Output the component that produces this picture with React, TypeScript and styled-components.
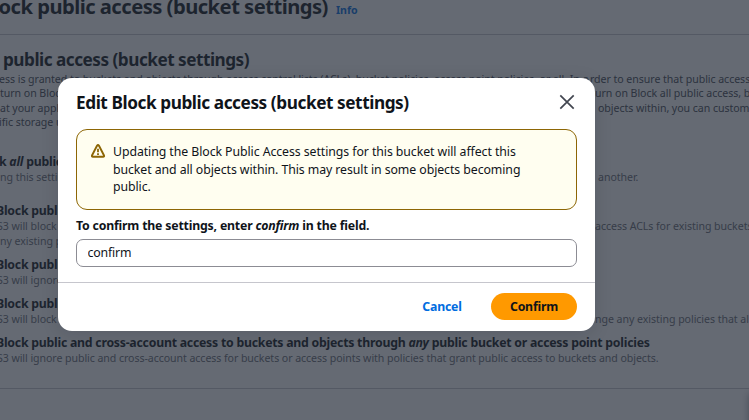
import React from "react";
import styled, { createGlobalStyle } from "styled-components";

const GlobalStyle = createGlobalStyle`
  * { box-sizing: border-box; }
  html, body { margin: 0; padding: 0; overflow: hidden; }
  body { font-family: "Noto Sans", "Open Sans", sans-serif; color: #0f141a; background: #fff; }
`;

const Screen = styled.div`
  position: relative;
  width: 749px;
  height: 420px;
  overflow: hidden;
  background: #fff;
`;

const Page = styled.main`
  display: flex;
  flex-direction: column;
  height: 100%;
  overflow: hidden;
  white-space: nowrap;
`;

const PageHeader = styled.header`
  display: flex;
  align-items: baseline;
  gap: 8px;
  height: 34px;
  margin-left: -7px;
  flex: none;
`;

const PageTitle = styled.h1`
  margin: -8px 0 0;
  font-size: 20.2px;
  line-height: 28px;
  font-weight: 700;
  letter-spacing: -0.53px;
`;

const InfoLink = styled.a`
  font-size: 10.6px;
  font-weight: 700;
  letter-spacing: 0;
  color: #006ce0;
`;

const SettingsPanel = styled.section`
  height: 355px;
  flex: none;
  border-top: 1px solid #c6c6cd;
  border-bottom: 1px solid #c6c6cd;
  padding-top: 13px;
`;

const PanelTitle = styled.h2`
  margin: 0 0 0 3px;
  font-size: 17.2px;
  line-height: 24px;
  font-weight: 700;
  letter-spacing: -0.5px;
`;

const Description = styled.div`
  display: flex;
  flex-direction: column;
  height: 57px;
  color: #424650;
`;

const Line = styled.div<{ $indent?: number; $height?: number; $spacing?: number }>`
  display: flex;
  height: ${(p) => p.$height ?? 14.3}px;
  line-height: ${(p) => p.$height ?? 14.3}px;
  margin-left: ${(p) => p.$indent ?? 0}px;
  font-size: 10.6px;
  letter-spacing: ${(p) => p.$spacing ?? -0.05}px;
  white-space: pre;
`;

const Lead = styled.span<{ $width: number }>`
  flex: none;
  width: ${(p) => p.$width}px;
  overflow: hidden;
`;

const Options = styled.div`
  display: flex;
  flex-direction: column;
  gap: 8px;
  padding-top: 25px;
`;

const Option = styled.div<{ $root?: boolean }>`
  margin-bottom: ${(p) => (p.$root ? 10 : 0)}px;
  color: #656871;
`;

const OptionTitle = styled.h3<{ $indent: number }>`
  margin: 0 0 0 ${(p) => p.$indent}px;
  height: 16px;
  font-size: 12.3px;
  line-height: 16px;
  font-weight: 700;
  letter-spacing: -0.245px;
  color: #0f141a;
`;

const HelpHandle = styled.div`
  position: absolute;
  left: 750px;
  top: 394px;
  width: 20px;
  height: 40px;
  box-shadow: 0 0 8px rgba(0, 7, 22, 0.5);
`;

const Overlay = styled.div`
  position: absolute;
  inset: 0;
  display: flex;
  align-items: flex-start;
  padding: 78px 0 0 58px;
  background: rgba(35, 43, 55, 0.7);
`;

const Dialog = styled.div`
  width: 537px;
  height: 253px;
  display: flex;
  flex-direction: column;
  background: #fff;
  border-radius: 14px;
  box-shadow: 0 3px 18px rgba(0, 7, 22, 0.12);
`;

const DialogHeader = styled.div`
  display: flex;
  align-items: center;
  justify-content: space-between;
  height: 51px;
  padding: 0 20px 3px 18px;
`;

const DialogTitle = styled.h2`
  margin: 0;
  padding-top: 1px;
  font-size: 17.2px;
  line-height: 22px;
  font-weight: 700;
  letter-spacing: -0.42px;
`;

const CloseButton = styled.button`
  display: flex;
  padding: 0;
  border: 0;
  background: none;
  color: #424650;
`;

const DialogBody = styled.div`
  display: flex;
  flex-direction: column;
  flex: 1;
  padding: 0 18px;
`;

const Alert = styled.div`
  display: flex;
  gap: 7px;
  height: 81px;
  padding: 13px 40px 0 14px;
  border: 1.5px solid #8d6605;
  border-radius: 11px;
  background: #fffef0;
`;

const AlertIcon = styled.svg`
  flex: none;
  margin-top: 1px;
`;

const AlertText = styled.p`
  margin: 0;
  font-size: 12.3px;
  line-height: 17.6px;
  letter-spacing: -0.07px;
  white-space: nowrap;
`;

const FieldLabel = styled.label`
  height: 29px;
  padding-top: 7px;
  font-size: 12.3px;
  line-height: 18px;
  font-weight: 700;
  letter-spacing: -0.19px;
`;

const TextInput = styled.input`
  width: 100%;
  height: 28px;
  padding: 0 10.5px 1px;
  border: 1.5px solid #8c8c94;
  border-radius: 7px;
  outline: 0;
  background: #fff;
  color: #0f141a;
  font: 12.3px "Noto Sans", sans-serif;
  letter-spacing: -0.15px;
`;

const DialogFooter = styled.div`
  display: flex;
  align-items: center;
  justify-content: flex-end;
  gap: 11px;
  height: 49px;
  padding: 0 18px 1px 0;
  border-top: 1px solid #c6c6cd;
`;

const Button = styled.button<{ $primary?: boolean }>`
  height: 27px;
  padding: 0 18px;
  border: 0;
  border-radius: 14px;
  background: ${(p) => (p.$primary ? "#ff9900" : "transparent")};
  color: ${(p) => (p.$primary ? "#0f141a" : "#006ce0")};
  width: ${(p) => (p.$primary ? 86 : 76)}px;
  font: 700 12.3px "Noto Sans", sans-serif;
  letter-spacing: -0.2px;
`;

export default function App() {
  return (
    <>
      <GlobalStyle />
      <Screen>
        <Page>
          <PageHeader>
            <PageTitle>lock public access (bucket settings)</PageTitle>
            <InfoLink>Info</InfoLink>
          </PageHeader>
          <SettingsPanel>
            <PanelTitle>public access (bucket settings)</PanelTitle>
            <Description>
              <Line $indent={-6}>
                <Lead $width={596}>
                  cess is granted to buckets and objects through access control lists (ACLs), bucket policies, access point policies, or all. In o
                </Lead>
                rder to ensure that public access
              </Line>
              <Line>
                <Lead $width={595}>turn on Block all public access. These settings apply only to this bucket. AWS recommends that you</Lead>
                urn on Block all public access, but
              </Line>
              <Line>
                <Lead $width={598}>at your applications will work correctly without public access. If you require some level of public</Lead>
                objects within, you can customize
              </Line>
              <Line $indent={-1}>ific storage use cases.</Line>
            </Description>
            <Options>
              <Option $root>
                <OptionTitle $indent={-1}>
                  k <em>all</em> public access
                </OptionTitle>
                <Line $height={15}>
                  <Lead $width={598}>ng this setting on is the same as turning on all four settings below. Each is independent of one</Lead>
                  another.
                </Line>
              </Option>
              <Option>
                <OptionTitle $indent={-4}>Block public access granted through new access control lists</OptionTitle>
                <Line $height={15} $indent={-3}>
                  <Lead $width={598}>S3 will block public access permissions applied to newly added buckets or objects, and prevent new</Lead>
                  access ACLs for existing buckets
                </Line>
                <Line $height={15} $indent={-6}>any existing permissions that allow public access</Line>
              </Option>
              <Option>
                <OptionTitle $indent={-4}>Block public access granted through any access control lists</OptionTitle>
                <Line $height={15} $indent={-3}>S3 will ignore all ACLs that grant public access to buckets.</Line>
              </Option>
              <Option>
                <OptionTitle $indent={-4}>Block public access granted through new public bucket policies</OptionTitle>
                <Line $height={15} $indent={-3}>
                  <Lead $width={598}>S3 will block new bucket and access point policies that grant public access to buckets. This won't cha</Lead>
                  nge any existing policies that allow
                </Line>
              </Option>
              <Option>
                <OptionTitle $indent={-4}>
                  Block public and cross-account access to buckets and objects through <em>any</em> public bucket or access point policies
                </OptionTitle>
                <Line $height={15} $indent={-3} $spacing={-0.065}>
                  S3 will ignore public and cross-account access for buckets or access points with policies that grant public access to buckets and objects.
                </Line>
              </Option>
            </Options>
          </SettingsPanel>
        </Page>
        <HelpHandle />
        <Overlay>
          <Dialog role="dialog">
            <DialogHeader>
              <DialogTitle>Edit Block public access (bucket settings)</DialogTitle>
              <CloseButton aria-label="Close">
                <svg width="16" height="16" viewBox="0 0 16 16" fill="none" stroke="currentColor" strokeWidth="1.7">
                  <path d="M1.3 1.3 14.7 14.7M14.7 1.3 1.3 14.7" />
                </svg>
              </CloseButton>
            </DialogHeader>
            <DialogBody>
              <Alert>
                <AlertIcon width="15" height="15" viewBox="0 0 15 15" fill="none" stroke="#8d6605" strokeWidth="1.9">
                  <path d="M6 1.8 1.1 11.2q-.7 1.5.8 1.5h10.2q1.5 0 .8-1.5L8 1.8q-1-1.5-2 0Z" strokeLinejoin="round" />
                  <path d="M7 4.8v3.4M7 9.2v1.7" strokeWidth="1.8" />
                </AlertIcon>
                <AlertText>
                  Updating the Block Public Access settings for this bucket will affect this
                  <br />
                  bucket and all objects within. This may result in some objects becoming
                  <br />
                  public.
                </AlertText>
              </Alert>
              <FieldLabel htmlFor="confirmation">
                To confirm the settings, enter <em>confirm</em> in the field.
              </FieldLabel>
              <TextInput id="confirmation" defaultValue="confirm" />
            </DialogBody>
            <DialogFooter>
              <Button>Cancel</Button>
              <Button $primary>Confirm</Button>
            </DialogFooter>
          </Dialog>
        </Overlay>
      </Screen>
    </>
  );
}
